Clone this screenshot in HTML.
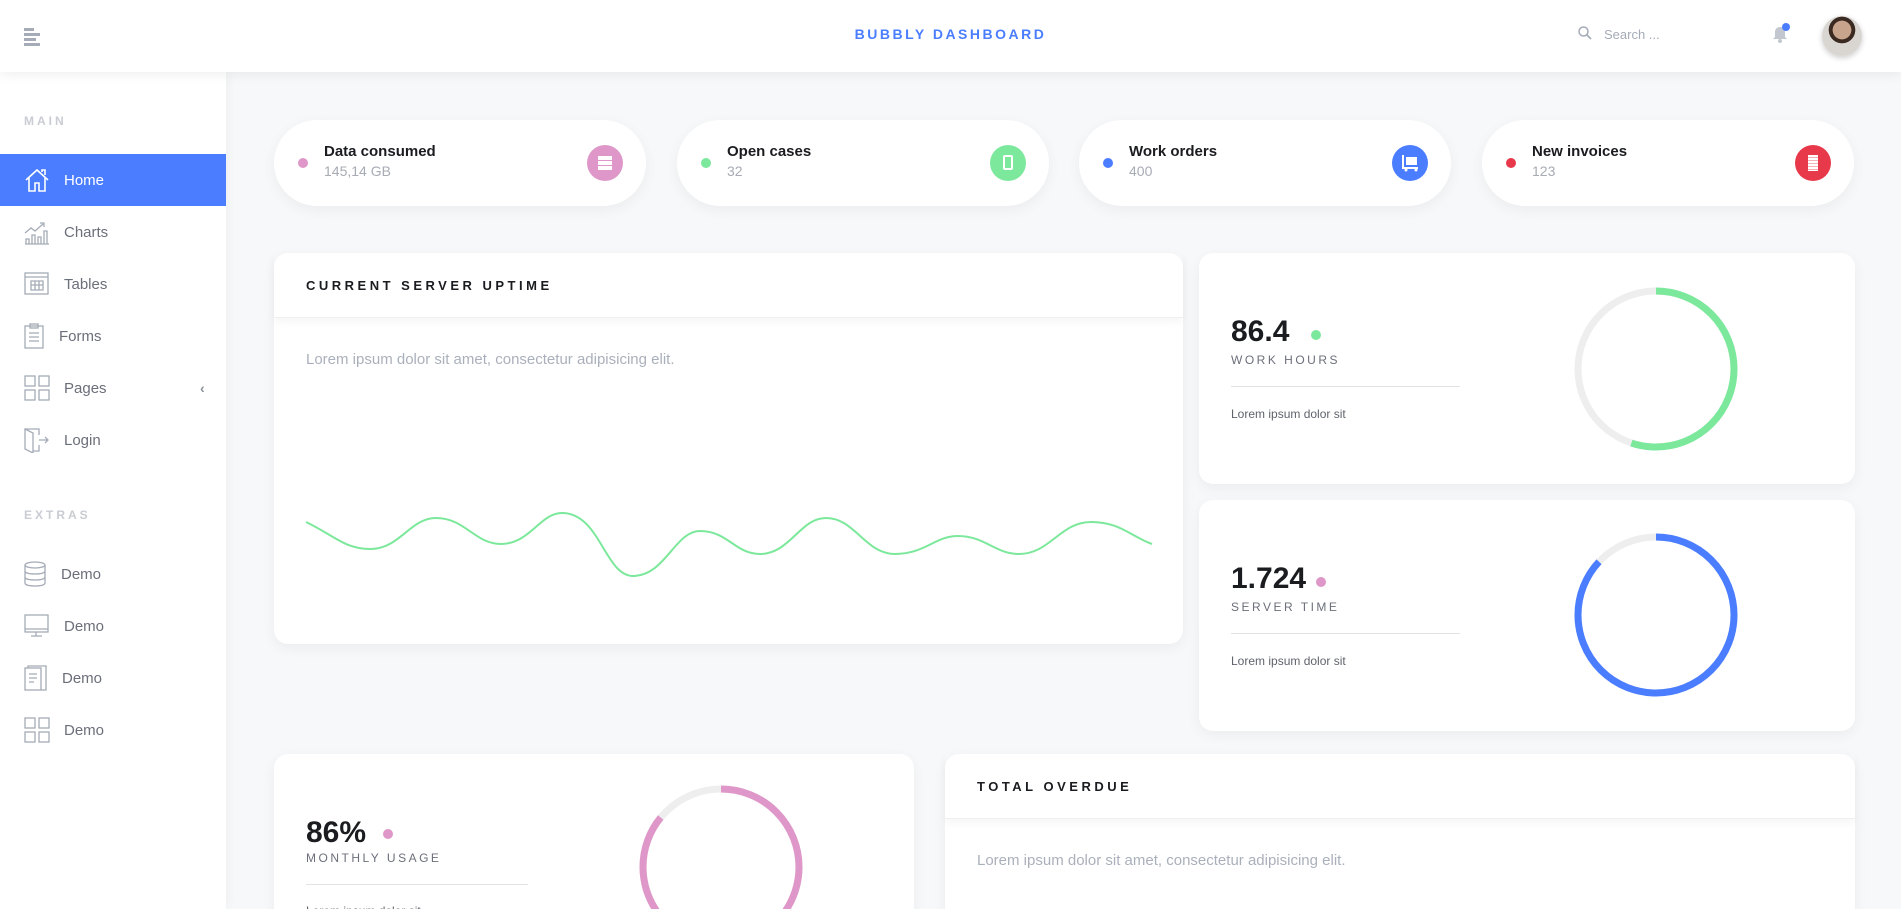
<!DOCTYPE html>
<html><head><meta charset="utf-8">
<style>
*{margin:0;padding:0;box-sizing:border-box}
html{width:1901px;height:909px;overflow:hidden}
body{width:1901px;height:909px;overflow:hidden;background:#f7f8fa;font-family:"Liberation Sans",sans-serif;position:relative}
.abs{position:absolute}
.header{left:0;top:0;width:1901px;height:72px;background:#fff;box-shadow:0 2px 12px rgba(0,0,0,.07);z-index:3}
.side{left:0;top:72px;width:226px;height:837px;background:#fff;box-shadow:2px 0 10px rgba(0,0,0,.04);z-index:2}
.sec{position:absolute;left:24px;font-size:12px;font-weight:bold;letter-spacing:3px;color:#c9ccd3}
.item{position:absolute;left:0;width:226px;height:52px;font-size:15px;color:#6b6f7a;display:flex;align-items:center}
.item svg{position:absolute;left:24px}
.item span{position:absolute;left:64px}
.item.act{background:#4a7dff;color:#fff}
.stat{position:absolute;top:120px;width:372px;height:86px;background:#fff;border-radius:43px;box-shadow:0 4px 14px rgba(0,0,0,.05)}
.stat .dot{position:absolute;left:24px;top:38px;width:10px;height:10px;border-radius:50%}
.stat .t{position:absolute;left:50px;top:23px;font-size:15px;font-weight:bold;color:#1b1c20}
.stat .v{position:absolute;left:50px;top:43px;font-size:14px;color:#a7abb4}
.stat .ic{position:absolute;left:313px;top:25px;width:36px;height:36px;border-radius:50%}
.card{position:absolute;background:#fff;border-radius:14px;box-shadow:0 4px 14px rgba(0,0,0,.05)}
.ch{position:absolute;left:0;top:0;right:0;height:65px;border-bottom:1px solid #f0f0f0;box-shadow:0 4px 8px rgba(0,0,0,.04);font-size:13px;font-weight:bold;letter-spacing:3.5px;color:#1b1c20;padding:25px 0 0 32px}
.lorem{position:absolute;font-size:15px;color:#aab0bb}
.big{position:absolute;font-size:30px;font-weight:bold;color:#1b1c20}
.lab{position:absolute;font-size:12px;letter-spacing:2.5px;color:#6b6f7a}
.hr{position:absolute;height:1px;background:#e2e3e6}
.sm{position:absolute;font-size:12px;color:#5f636c}
</style></head><body>
<div class="abs header">
  <div class="abs" style="left:24px;top:28px;width:10px;height:2.5px;background:#a5acb7"></div>
  <div class="abs" style="left:24px;top:33px;width:16px;height:2.5px;background:#a5acb7"></div>
  <div class="abs" style="left:24px;top:38px;width:12px;height:2.5px;background:#a5acb7"></div>
  <div class="abs" style="left:24px;top:43px;width:16px;height:2.5px;background:#a5acb7"></div>
  <div class="abs" style="left:0;width:1901px;top:26px;text-align:center;font-size:14px;font-weight:bold;letter-spacing:2.5px;color:#4a7dff">BUBBLY DASHBOARD</div>
  <svg class="abs" style="left:1578px;top:26px" width="14" height="14" viewBox="0 0 14 14"><circle cx="5.5" cy="5.5" r="4.5" fill="none" stroke="#a5acb7" stroke-width="1.5"/><path d="M9 9l4 4" stroke="#a5acb7" stroke-width="1.6"/></svg>
  <div class="abs" style="left:1604px;top:27px;font-size:13px;color:#a5acb7">Search ...</div>
  <svg class="abs" style="left:1772px;top:24px" width="16" height="20" viewBox="0 0 16 20"><path d="M8 3c-3 0-5 2-5 5v5l-2 2h14l-2-2V8c0-3-2-5-5-5z" fill="#c3c8d0"/><circle cx="8" cy="17" r="2" fill="#c3c8d0"/></svg>
  <div class="abs" style="left:1782px;top:23px;width:8px;height:8px;border-radius:50%;background:#4a7dff"></div>
  <div class="abs" style="left:1822px;top:16px;width:40px;height:40px;border-radius:50%;background:radial-gradient(circle at 50% 35%,#c9a48c 0 28%,#3b2a22 29% 40%,#d9d6d2 41%);box-shadow:0 2px 6px rgba(0,0,0,.2)"></div>
</div>
<div class="abs side">
  <div class="sec" style="top:42px">MAIN</div>
  <div class="item act" style="top:82px"><svg width="26" height="26" viewBox="0 0 26 26" fill="none" stroke="#fff" stroke-width="1.6"><path d="M2 13L13 3l11 10M5 11v13h6v-8h4v8h6V11M18 5V3h3v5"/></svg><span>Home</span></div>
  <div class="item" style="top:134px"><svg width="26" height="26" viewBox="0 0 26 26" fill="none" stroke="#a5acb7" stroke-width="1.3"><path d="M1 14l6-5 4 3 8-7M16 4h4v4M1 25h24M2 20h3v5H2zM8 16h3v9H8zM14 18h3v7h-3zM20 12h3v13h-3z"/></svg><span>Charts</span></div>
  <div class="item" style="top:186px"><svg width="26" height="24" viewBox="0 0 26 24" fill="none" stroke="#a5acb7" stroke-width="1.3"><rect x="1" y="1" width="23" height="21"/><path d="M1 5h23M7 9h12v9H7zM7 13h12M11 9v9M15 9v9"/></svg><span>Tables</span></div>
  <div class="item" style="top:238px"><svg width="20" height="26" viewBox="0 0 20 26" fill="none" stroke="#a5acb7" stroke-width="1.3"><rect x="1" y="3" width="18" height="22"/><rect x="6" y="1" width="8" height="4"/><path d="M5 10h10M5 14h10M5 18h10"/></svg><span style="left:59px">Forms</span></div>
  <div class="item" style="top:290px"><svg width="26" height="26" viewBox="0 0 26 26" fill="none" stroke="#a5acb7" stroke-width="1.3"><rect x="1" y="1" width="10" height="10"/><rect x="15" y="1" width="10" height="10"/><rect x="1" y="15" width="10" height="10"/><rect x="15" y="15" width="10" height="10"/></svg><span>Pages</span><b style="position:absolute;left:200px;font-size:14px;color:#8a8f99">‹</b></div>
  <div class="item" style="top:342px"><svg width="26" height="26" viewBox="0 0 26 26" fill="none" stroke="#a5acb7" stroke-width="1.3"><path d="M1 2h14v6M15 18v6H9M1 2l8 4v20l-8-4zM15 13h9M21 10l3 3-3 3"/></svg><span>Login</span></div>
  <div class="sec" style="top:436px">EXTRAS</div>
  <div class="item" style="top:476px"><svg width="22" height="26" viewBox="0 0 22 26" fill="none" stroke="#a5acb7" stroke-width="1.3"><ellipse cx="11" cy="4" rx="10" ry="3"/><path d="M1 4v18c0 2 4.5 3 10 3s10-1 10-3V4M1 10c0 2 4.5 3 10 3s10-1 10-3M1 16c0 2 4.5 3 10 3s10-1 10-3"/></svg><span style="left:61px">Demo</span></div>
  <div class="item" style="top:528px"><svg width="26" height="24" viewBox="0 0 26 24" fill="none" stroke="#a5acb7" stroke-width="1.3"><rect x="1" y="1" width="23" height="17"/><path d="M1 15h23M12 18v4M7 22h11"/></svg><span>Demo</span></div>
  <div class="item" style="top:580px"><svg width="24" height="26" viewBox="0 0 24 26" fill="none" stroke="#a5acb7" stroke-width="1.3"><rect x="1" y="3" width="16" height="22"/><path d="M4 3V1h18v24h-5M5 9h8M5 13h8M5 17h5"/></svg><span style="left:62px">Demo</span></div>
  <div class="item" style="top:632px"><svg width="26" height="26" viewBox="0 0 26 26" fill="none" stroke="#a5acb7" stroke-width="1.3"><rect x="1" y="1" width="10" height="10"/><rect x="15" y="1" width="10" height="10"/><rect x="1" y="15" width="10" height="10"/><rect x="15" y="15" width="10" height="10"/></svg><span>Demo</span></div>
</div>

<div class="stat" style="left:274px"><div class="dot" style="background:#de97c8"></div><div class="t">Data consumed</div><div class="v">145,14 GB</div><div class="ic" style="background:#de97c8"><div class="abs" style="left:11px;top:11px;width:14px;height:14px;background:repeating-linear-gradient(#fff 0 4px,#de97c8 4px 5px)"></div></div></div>
<div class="stat" style="left:677px"><div class="dot" style="background:#7ce89b"></div><div class="t">Open cases</div><div class="v">32</div><div class="ic" style="background:#7ce89b"><div class="abs" style="left:13px;top:10px;width:10px;height:15px;border:2px solid #fff;border-radius:2px"></div></div></div>
<div class="stat" style="left:1079px"><div class="dot" style="background:#4a7dff"></div><div class="t">Work orders</div><div class="v">400</div><div class="ic" style="background:#4a7dff"><svg class="abs" style="left:9px;top:9px" width="18" height="18" viewBox="0 0 18 18" fill="#fff"><path d="M1 1h2v12h14v2H1z"/><rect x="5" y="3" width="11" height="8"/><circle cx="5" cy="16" r="1.5"/><circle cx="15" cy="16" r="1.5"/></svg></div></div>
<div class="stat" style="left:1482px"><div class="dot" style="background:#e8394b"></div><div class="t">New invoices</div><div class="v">123</div><div class="ic" style="background:#e8394b"><div class="abs" style="left:13px;top:10px;width:10px;height:16px;background:repeating-linear-gradient(#fff 0 2px,#f7b0b8 2px 3px)"></div></div></div>

<div class="card" style="left:274px;top:253px;width:909px;height:391px">
  <div class="ch">CURRENT SERVER UPTIME</div>
  <div class="lorem" style="left:32px;top:98px">Lorem ipsum dolor sit amet, consectetur adipisicing elit.</div>
</div>
<div class="card" style="left:1199px;top:253px;width:656px;height:231px">
  <div class="big" style="left:32px;top:62px">86.4</div><div class="abs" style="left:112px;top:77px;width:10px;height:10px;border-radius:50%;background:#7ce89b"></div>
  <div class="lab" style="left:32px;top:100px">WORK HOURS</div>
  <div class="hr" style="left:32px;top:133px;width:229px"></div>
  <div class="sm" style="left:32px;top:154px">Lorem ipsum dolor sit</div>
</div>
<div class="card" style="left:1199px;top:500px;width:656px;height:231px">
  <div class="big" style="left:32px;top:62px">1.724</div><div class="abs" style="left:117px;top:77px;width:10px;height:10px;border-radius:50%;background:#de97c8"></div>
  <div class="lab" style="left:32px;top:100px">SERVER TIME</div>
  <div class="hr" style="left:32px;top:133px;width:229px"></div>
  <div class="sm" style="left:32px;top:154px">Lorem ipsum dolor sit</div>
</div>
<div class="card" style="left:274px;top:754px;width:640px;height:170px">
  <div class="big" style="left:32px;top:62px">86%</div><div class="abs" style="left:109px;top:75px;width:10px;height:10px;border-radius:50%;background:#de97c8"></div>
  <div class="lab" style="left:32px;top:97px">MONTHLY USAGE</div>
  <div class="hr" style="left:32px;top:130px;width:222px"></div>
  <div class="sm" style="left:32px;top:150px">Lorem ipsum dolor sit</div>
</div>
<div class="card" style="left:945px;top:754px;width:910px;height:170px">
  <div class="ch">TOTAL OVERDUE</div>
  <div class="lorem" style="left:32px;top:98px">Lorem ipsum dolor sit amet, consectetur adipisicing elit.</div>
</div>

<svg class="abs" style="left:0;top:0;z-index:1" width="1901" height="909">
  <path d="M306 522 C335 536,345 549,370 549 C400 549,410 518,436 518 C465 518,475 544,501 544 C530 544,540 513,562 513 C600 513,605 576,633 576 C665 576,675 531,700 531 C728 531,735 554,760 554 C790 554,800 518,826 518 C855 518,865 554,895 554 C925 554,935 536,958 536 C985 536,995 554,1019 554 C1050 554,1060 522,1091 522 C1120 522,1130 536,1152 544" fill="none" stroke="#7ce89b" stroke-width="2"/>
  <g fill="none" stroke-width="7">
    <circle cx="1656" cy="369" r="78" stroke="#eeeeee"/>
    <circle cx="1656" cy="369" r="78" stroke="#7ce89b" stroke-dasharray="270 1000" transform="rotate(-90 1656 369)"/>
    <circle cx="1656" cy="615" r="78" stroke="#eeeeee"/>
    <circle cx="1656" cy="615" r="78" stroke="#4a7dff" stroke-dasharray="426 1000" transform="rotate(-90 1656 615)"/>
    <circle cx="721" cy="867" r="78" stroke="#eeeeee"/>
    <circle cx="721" cy="867" r="78" stroke="#de97c8" stroke-dasharray="421 1000" transform="rotate(-90 721 867)"/>
  </g>
</svg>
</body></html>
